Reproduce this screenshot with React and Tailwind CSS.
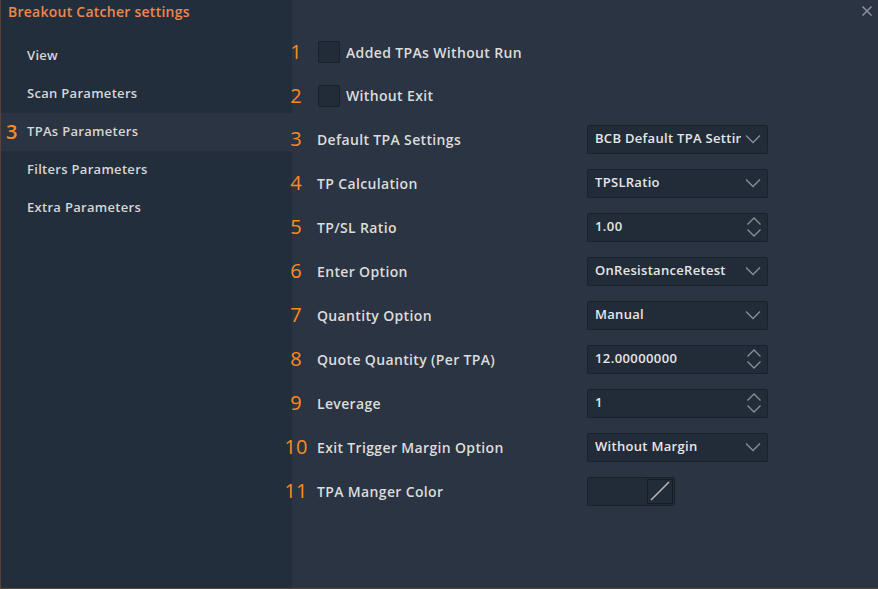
import React from "react";

const font = { fontFamily: '"Open Sans", "Noto Sans", sans-serif' };

function Chevron() {
  return (
    <svg width="16" height="10" viewBox="0 0 16 10" className="shrink-0">
      <path d="M1 1.5 L8 8.5 L15 1.5" fill="none" stroke="#8a8f96" strokeWidth="1.3" />
    </svg>
  );
}

function Spinner() {
  return (
    <svg width="16" height="22" viewBox="0 0 16 22" className="shrink-0">
      <path d="M1.5 8.5 L8 2 L14.5 8.5" fill="none" stroke="#8a8f96" strokeWidth="1.3" />
      <path d="M1.5 13.5 L8 20 L14.5 13.5" fill="none" stroke="#8a8f96" strokeWidth="1.3" />
    </svg>
  );
}

function Select({ value }) {
  return (
    <div className="w-[181px] h-[29px] bg-[#222c39] border border-[#19212b] rounded-[2px] flex items-center pl-[7px] pr-[6px] gap-1">
      <span className="flex-1 overflow-hidden whitespace-nowrap text-[13px] tracking-[0.3px] font-semibold text-[#e6e6e6]">{value}</span>
      <Chevron />
    </div>
  );
}

function Spin({ value }) {
  return (
    <div className="w-[181px] h-[29px] bg-[#222c39] border border-[#19212b] rounded-[2px] flex items-center pl-[7px] pr-[5px]">
      <span className="flex-1 overflow-hidden whitespace-nowrap text-[13px] tracking-[0.4px] font-semibold text-[#e6e6e6]">{value}</span>
      <Spinner />
    </div>
  );
}

function ColorPick() {
  return (
    <div className="w-[88px] h-[29px] bg-[#222c39] border border-[#19212b] rounded-[2px] flex items-center justify-end pr-[1px]">
      <div className="w-[26px] h-[25px] border border-[#161d26] flex items-center justify-center">
        <svg width="22" height="22" viewBox="0 0 22 22">
          <path d="M2 20 L20 2" stroke="#b8b8b8" strokeWidth="1.6" />
        </svg>
      </div>
    </div>
  );
}

function Num({ n }) {
  return (
    <span className="w-[30px] -ml-[11px] text-center text-[20px] leading-none text-[#ff8a1c] shrink-0">
      {n}
    </span>
  );
}

function CheckRow({ n, label, h }) {
  return (
    <div className={`flex items-center ${h}`}>
      <Num n={n} />
      <div className="ml-[7px] w-[22px] h-[22px] bg-[#222c39] border border-[#19212b] rounded-[2px]" />
      <span className="ml-[6px] text-[14px] tracking-[0.35px] font-semibold text-[#dcdcdc]">{label}</span>
    </div>
  );
}

function FieldRow({ n, label, children }) {
  return (
    <div className="flex items-center h-[44px]">
      <Num n={n} />
      <span className="ml-[6px] w-[270px] text-[14px] tracking-[0.35px] font-semibold text-[#dcdcdc]">{label}</span>
      {children}
    </div>
  );
}

export default function App() {
  const items = ["View", "Scan Parameters", "TPAs Parameters", "Filters Parameters", "Extra Parameters"];
  return (
    <div className="w-[878px] h-[589px] flex bg-[#2a3442] border-l border-b border-[#5a4333] overflow-hidden" style={font}>
      <div className="w-[291px] shrink-0 bg-[#222e3c] flex flex-col">
        <div className="h-[37px] pl-[7px] pt-[1px] text-[14px] tracking-[0.25px] font-semibold text-[#f0874a]">Breakout Catcher settings</div>
        {items.map((it, i) => (
          <div key={it} className={`relative h-[38px] flex items-center pl-[26px] text-[13px] tracking-[0.3px] font-semibold text-[#d6d6d6] ${i === 2 ? "bg-[#2a3442]" : ""}`}>
            {i === 2 && (
              <span className="absolute left-[5px] top-[9px] text-[20px] leading-none text-[#ff8a1c]">3</span>
            )}
            {it}
          </div>
        ))}
      </div>
      <div className="relative flex-1 flex flex-col pt-[30px]">
        <svg className="absolute right-[5px] top-[5px]" width="12" height="12" viewBox="0 0 12 12">
          <path d="M1.5 1.5 L10.5 10.5 M10.5 1.5 L1.5 10.5" stroke="#8e939a" strokeWidth="1.5" />
        </svg>
        <CheckRow n="1" label="Added TPAs Without Run" h="h-[44px]" />
        <CheckRow n="2" label="Without Exit" h="h-[43px]" />
        <FieldRow n="3" label="Default TPA Settings"><Select value="BCB Default TPA Settings" /></FieldRow>
        <FieldRow n="4" label="TP Calculation"><Select value="TPSLRatio" /></FieldRow>
        <FieldRow n="5" label="TP/SL Ratio"><Spin value="1.00" /></FieldRow>
        <FieldRow n="6" label="Enter Option"><Select value="OnResistanceRetest" /></FieldRow>
        <FieldRow n="7" label="Quantity Option"><Select value="Manual" /></FieldRow>
        <FieldRow n="8" label="Quote Quantity (Per TPA)"><Spin value="12.00000000" /></FieldRow>
        <FieldRow n="9" label="Leverage"><Spin value="1" /></FieldRow>
        <FieldRow n="10" label="Exit Trigger Margin Option"><Select value="Without Margin" /></FieldRow>
        <FieldRow n="11" label="TPA Manger Color"><ColorPick /></FieldRow>
      </div>
    </div>
  );
}
